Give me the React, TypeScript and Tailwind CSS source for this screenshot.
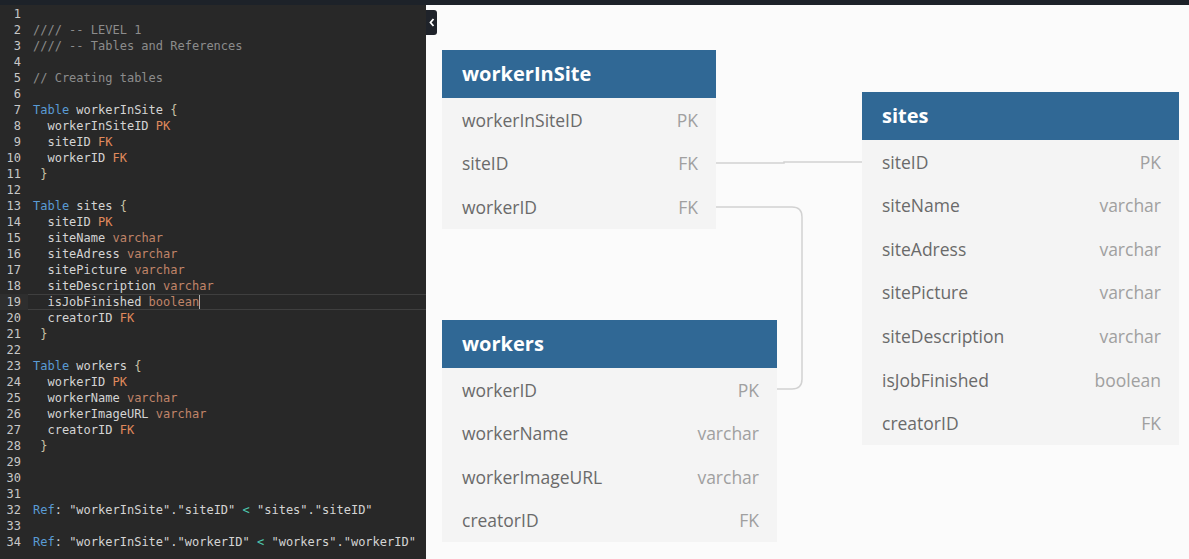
import React from "react";

type Tok = { t: string; c?: string };

const C = {
  com: "text-[#8c8c8c]",
  kw: "text-[#5a9bd5]",
  id: "text-[#d4d4d4]",
  key: "text-[#e08a5c]",
  type: "text-[#c08468]",
  br: "text-[#c9c2a6]",
  op: "text-[#4ec9b0]",
};

const field = (name: string, kind: string, cls: string): Tok[] => [
  { t: "  " + name + " ", c: C.id },
  { t: kind, c: cls },
];

const lines: Tok[][] = [
  [],
  [{ t: "//// -- LEVEL 1", c: C.com }],
  [{ t: "//// -- Tables and References", c: C.com }],
  [],
  [{ t: "// Creating tables", c: C.com }],
  [],
  [{ t: "Table", c: C.kw }, { t: " workerInSite ", c: C.id }, { t: "{", c: C.br }],
  field("workerInSiteID", "PK", C.key),
  field("siteID", "FK", C.key),
  field("workerID", "FK", C.key),
  [{ t: " }", c: C.br }],
  [],
  [{ t: "Table", c: C.kw }, { t: " sites ", c: C.id }, { t: "{", c: C.br }],
  field("siteID", "PK", C.key),
  field("siteName", "varchar", C.type),
  field("siteAdress", "varchar", C.type),
  field("sitePicture", "varchar", C.type),
  field("siteDescription", "varchar", C.type),
  field("isJobFinished", "boolean", C.type),
  field("creatorID", "FK", C.key),
  [{ t: " }", c: C.br }],
  [],
  [{ t: "Table", c: C.kw }, { t: " workers ", c: C.id }, { t: "{", c: C.br }],
  field("workerID", "PK", C.key),
  field("workerName", "varchar", C.type),
  field("workerImageURL", "varchar", C.type),
  field("creatorID", "FK", C.key),
  [{ t: " }", c: C.br }],
  [],
  [],
  [],
  [
    { t: "Ref", c: C.kw },
    { t: ': "workerInSite"."siteID" ', c: C.id },
    { t: "<", c: C.op },
    { t: ' "sites"."siteID"', c: C.id },
  ],
  [],
  [
    { t: "Ref", c: C.kw },
    { t: ': "workerInSite"."workerID" ', c: C.id },
    { t: "<", c: C.op },
    { t: ' "workers"."workerID"', c: C.id },
  ],
];

function Editor() {
  return (
    <div className="w-[426px] shrink-0 bg-[#282828] pt-px font-['DejaVu_Sans_Mono',monospace] text-[12px] leading-[16px] overflow-hidden">
      {lines.map((toks, i) => {
        const active = i === 18;
        return (
          <div key={i} className="flex h-4">
            <div
              className={
                "w-[28px] shrink-0 pr-[7px] text-right text-[#c8c8c8] " +
                (active ? "bg-[#2e2e2e]" : "")
              }
            >
              {i + 1}
            </div>
            <div
              className={
                "flex-1 pl-[5px] whitespace-pre " +
                (active ? "border-y border-[#3f3f3f] leading-[14px]" : "")
              }
            >
              {toks.map((tk, j) => (
                <span key={j} className={tk.c}>
                  {tk.t}
                </span>
              ))}
              {active && <span className="inline-block w-px h-[14px] bg-[#aeaeae] align-top" />}
            </div>
          </div>
        );
      })}
    </div>
  );
}

type Row = [string, string];

function DbTable({
  name,
  rows,
  className,
}: {
  name: string;
  rows: Row[];
  className: string;
}) {
  return (
    <div className={"absolute font-['Open_Sans',sans-serif] " + className}>
      <div className="h-[48px] bg-[#306895] flex items-center pl-[20px] text-white font-bold text-[20px]">
        {name}
      </div>
      <div className="bg-[#f4f4f4]">
        {rows.map(([n, t]) => (
          <div
            key={n}
            className="h-[43.6px] flex items-center justify-between pl-[20px] pr-[18px] text-[17.5px]"
          >
            <span className="text-[#6a6a6a]">{n}</span>
            <span className="text-[#a0a0a0]">{t}</span>
          </div>
        ))}
      </div>
    </div>
  );
}

function Canvas() {
  return (
    <div className="relative flex-1 bg-[#fbfbfb] overflow-hidden">
      <svg className="absolute inset-0" width="763" height="554">
        <g fill="none" stroke="#d2d2d2" strokeWidth="1.5">
          <path d="M290 158 H358 V157 H436" />
          <path d="M290 202 H366 Q376 202 376 212 V374 Q376 384 366 384 H351" />
        </g>
      </svg>
      <DbTable
        name="workerInSite"
        className="left-[16px] top-[45px] w-[274px]"
        rows={[
          ["workerInSiteID", "PK"],
          ["siteID", "FK"],
          ["workerID", "FK"],
        ]}
      />
      <DbTable
        name="sites"
        className="left-[436px] top-[87px] w-[317px]"
        rows={[
          ["siteID", "PK"],
          ["siteName", "varchar"],
          ["siteAdress", "varchar"],
          ["sitePicture", "varchar"],
          ["siteDescription", "varchar"],
          ["isJobFinished", "boolean"],
          ["creatorID", "FK"],
        ]}
      />
      <DbTable
        name="workers"
        className="left-[16px] top-[315px] w-[335px]"
        rows={[
          ["workerID", "PK"],
          ["workerName", "varchar"],
          ["workerImageURL", "varchar"],
          ["creatorID", "FK"],
        ]}
      />
      {/* collapse toggle */}
      <div className="absolute left-0 top-[5px] w-[11px] h-[25px] bg-[#1f232a] rounded-r-[3px] flex items-center justify-center">
        <svg width="6" height="9" viewBox="0 0 6 9">
          <path d="M4.5 1 L1.5 4.5 L4.5 8" fill="none" stroke="#fff" strokeWidth="1.8" />
        </svg>
      </div>
    </div>
  );
}

export default function App() {
  return (
    <div className="w-[1189px] h-[559px] flex flex-col bg-[#fbfbfb] overflow-hidden">
      <div className="h-[5px] bg-[#1d2229] shrink-0" />
      <div className="flex flex-1 min-h-0">
        <Editor />
        <Canvas />
      </div>
    </div>
  );
}
